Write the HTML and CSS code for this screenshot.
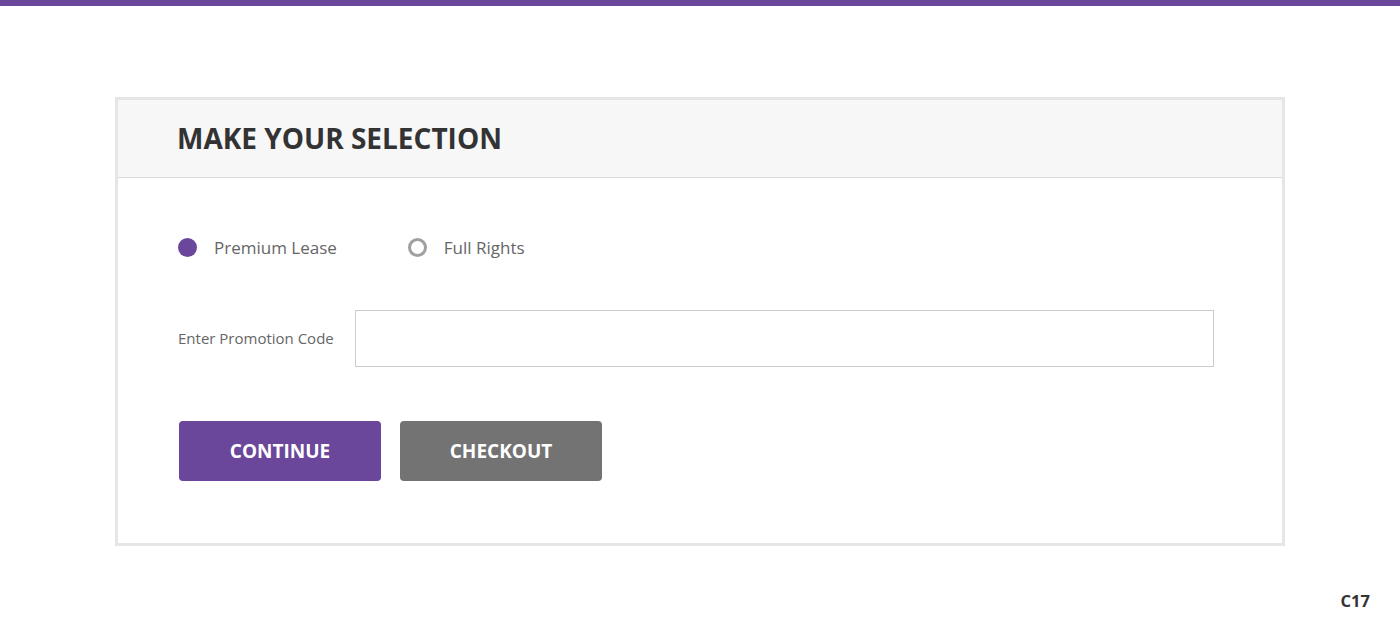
FILE: index.html
```html
<!DOCTYPE html>
<html>
<head>
<meta charset="utf-8">
<link rel="stylesheet" href="styles.css">
</head>
<body>
<div class="topbar"></div>
<main class="page">
  <section class="card">
    <header class="card-head">
      <h1 class="title">MAKE YOUR SELECTION</h1>
    </header>
    <div class="card-body">
      <div class="radios">
        <label class="radio"><span class="dot dot-on"></span><span class="radio-label">Premium Lease</span></label>
        <label class="radio"><span class="dot dot-off"></span><span class="radio-label">Full Rights</span></label>
      </div>
      <div class="promo">
        <span class="promo-label">Enter Promotion Code</span>
        <input class="promo-input" type="text">
      </div>
      <div class="actions">
        <button class="btn btn-primary">CONTINUE</button>
        <button class="btn btn-secondary">CHECKOUT</button>
      </div>
    </div>
  </section>
  <div class="code">C17</div>
</main>
</body>
</html>
```

FILE: styles.css
```css
* { box-sizing: border-box; }
html, body { margin: 0; padding: 0; background: #fff; }
body { font-family: "Open Sans", "Liberation Sans", sans-serif; color: #333; }
.topbar { height: 6px; background: #6b479b; }
.page { padding: 91px 115px 0 115px; position: relative; height: 630px; }
.card { width: 1170px; height: 449px; border: 3px solid #e6e6e6; }
.card-head { height: 78px; background: #f7f7f7; border-bottom: 1px solid #dcdcdc; padding: 0 0 2px 59px; display: flex; align-items: center; }
.title { margin: 0; font-size: 28px; font-weight: 700; color: #333; letter-spacing: 0; }
.card-body { padding: 58px 0 0 60px; }
.radios { display: flex; align-items: center; height: 22px; }
.radio { display: flex; align-items: center; }
.radio + .radio { margin-left: 71px; }
.dot { width: 19px; height: 19px; border-radius: 50%; display: inline-block; }
.dot-on { background: #6b479b; }
.dot-off { border: 3px solid #a0a0a0; background: #fff; }
.radio-label { margin-left: 17px; font-size: 17px; color: #666; }
.promo { display: flex; align-items: center; margin-top: 52px; }
.promo-label { font-size: 15px; color: #666; width: 177px; padding-bottom: 2px; }
.promo-input { width: 859px; height: 57px; border: 1px solid #ccc; border-radius: 0; outline: none; margin: 0; }
.actions { display: flex; margin-top: 54px; padding-left: 1px; }
.btn { width: 202px; height: 60px; border: none; border-radius: 4px; color: #fff; font-family: "Open Sans", "Liberation Sans", sans-serif; font-size: 19px; font-weight: 700; cursor: pointer; }
.btn + .btn { margin-left: 19px; }
.btn-primary { background: #6b479b; }
.btn-secondary { background: #737373; }
.code { position: absolute; right: 30px; top: 583px; font-size: 16.5px; font-weight: 700; color: #333; }
```
